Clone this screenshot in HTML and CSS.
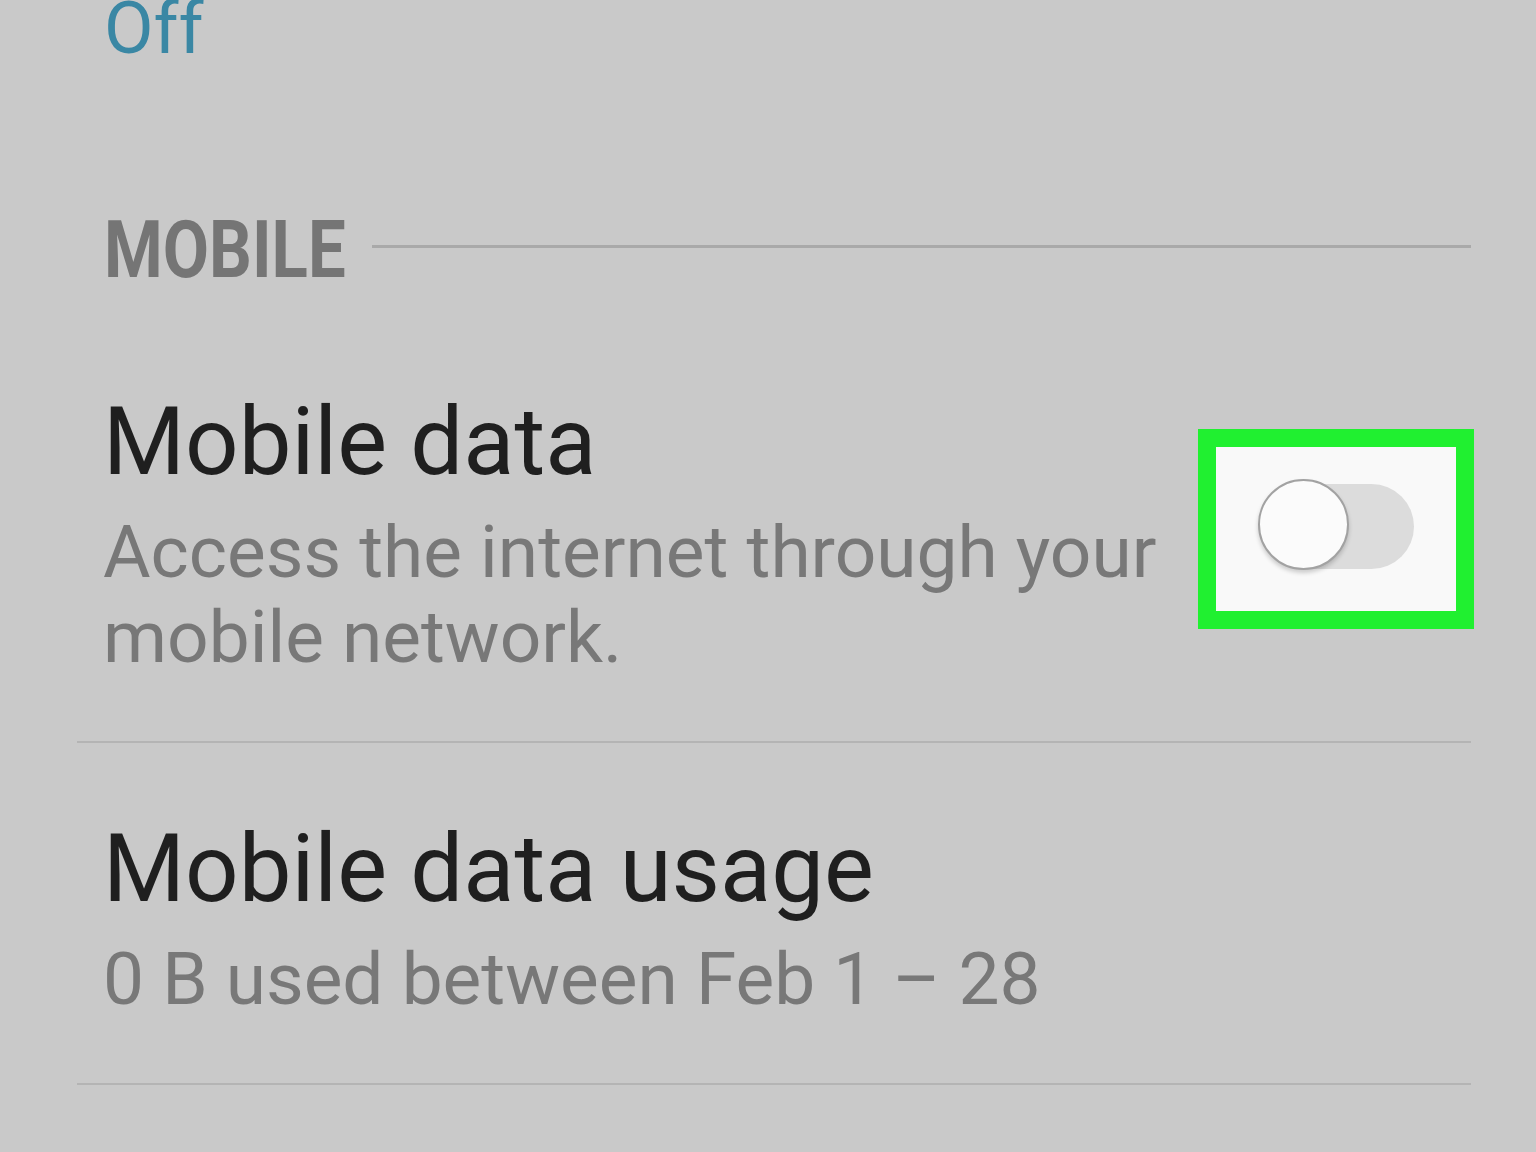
FILE: index.html
```html
<!DOCTYPE html>
<html lang="en">
<head>
<meta charset="utf-8">
<title>Mobile settings</title>
<link rel="stylesheet" href="styles.css">
</head>
<body>
<div class="screen">
  <div class="status-value">Off</div>

  <div class="section-header">
    <span class="section-label"><span class="section-label-text">MOBILE</span></span>
    <span class="section-rule"></span>
  </div>

  <div class="item item-first">
    <div class="item-text">
      <div class="item-title">Mobile data</div>
      <div class="item-summary">Access the internet through your mobile network.</div>
    </div>
    <div class="highlight">
      <div class="switch">
        <span class="switch-track"></span>
        <span class="switch-knob"></span>
      </div>
    </div>
  </div>
  <div class="divider"></div>

  <div class="item">
    <div class="item-text">
      <div class="item-title">Mobile data usage</div>
      <div class="item-summary">0 B used between Feb 1 – 28</div>
    </div>
  </div>
  <div class="divider"></div>
</div>
</body>
</html>
```

FILE: styles.css
```css
html, body {
  margin: 0;
  padding: 0;
}

body {
  background: #c9c9c9;
  font-family: Roboto, "Noto Sans", "Liberation Sans", sans-serif;
  width: 1536px;
  height: 1152px;
  overflow: hidden;
}

.screen {
  margin: 0 65px 0 77px;
}

.status-value {
  padding-left: 27px;
  font-size: 72px;
  line-height: 58px;
  color: #3a87a4;
}

.section-header {
  display: flex;
  align-items: center;
  margin-top: 152px;
  padding-left: 27px;
  height: 80px;
}

.section-label {
  display: block;
  width: 243px;
  flex: none;
  white-space: nowrap;
  font-size: 79px;
  line-height: 80px;
  font-weight: 700;
  color: #757575;
}

.section-label-text {
  display: inline-block;
  transform: scaleX(0.85);
  transform-origin: left center;
}

.section-rule {
  flex: 1;
  height: 3px;
  margin-left: 25px;
  margin-top: -8px;
  background: #a9a9a9;
}

.item {
  display: flex;
  align-items: flex-start;
  padding: 76px 0 61px 26px;
}

.item-first {
  padding-top: 102px;
}

.item-text {
  flex: 1;
  min-width: 0;
}

.item-title {
  font-size: 94px;
  line-height: 100px;
  color: #1f1f1f;
}

.item-summary {
  margin-top: 18px;
  font-size: 73px;
  line-height: 85px;
  color: #787878;
}

.divider {
  height: 2px;
  background: #b4b4b4;
}

.highlight {
  flex: none;
  margin-top: 37px;
  margin-right: -3px;
  width: 240px;
  border: 18px solid #20f030;
  background: #f9f9f9;
  display: flex;
  align-items: center;
  justify-content: center;
  padding-bottom: 10px;
  box-sizing: content-box;
  height: 154px;
}

.switch {
  position: relative;
  width: 156px;
  height: 91px;
}

.switch-track {
  position: absolute;
  left: 5px;
  right: 0;
  top: 5px;
  height: 85px;
  border-radius: 43px;
  background: #dcdcdc;
}

.switch-knob {
  position: absolute;
  left: 0;
  top: 0;
  width: 87px;
  height: 87px;
  border-radius: 50%;
  background: #fbfbfb;
  border: 2px solid #a2a2a2;
  box-shadow: 0 3px 4px rgba(0, 0, 0, 0.18);
}
```
